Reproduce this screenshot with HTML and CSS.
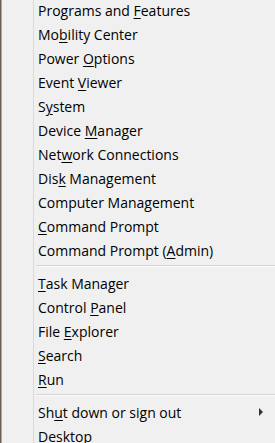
FILE: index.html
```html
<!DOCTYPE html>
<html lang="en">
<head>
    <meta charset="UTF-8">
    <meta name="viewport" content="width=device-width, initial-scale=1.0">
    <title>Quick Link Menu</title>
    <link rel="stylesheet" href="styles.css">
</head>
<body>
    <div class="menu">
        <div class="gutter"></div>
        <ul class="items">
            <li class="item">Programs and <u>F</u>eatures</li>
            <li class="item">Mo<u>b</u>ility Center</li>
            <li class="item">Power <u>O</u>ptions</li>
            <li class="item">Event <u>V</u>iewer</li>
            <li class="item">S<u>y</u>stem</li>
            <li class="item">Device <u>M</u>anager</li>
            <li class="item">Net<u>w</u>ork Connections</li>
            <li class="item">Dis<u>k</u> Management</li>
            <li class="item">Computer Mana<u>g</u>ement</li>
            <li class="item"><u>C</u>ommand Prompt</li>
            <li class="item">Command Prompt (<u>A</u>dmin)</li>
            <li class="sep"></li>
            <li class="item"><u>T</u>ask Manager</li>
            <li class="item">Control <u>P</u>anel</li>
            <li class="item">File <u>E</u>xplorer</li>
            <li class="item"><u>S</u>earch</li>
            <li class="item"><u>R</u>un</li>
            <li class="sep"></li>
            <li class="item has-sub">Sh<u>u</u>t down or sign out<span class="arrow"></span></li>
            <li class="item"><u>D</u>esktop</li>
        </ul>
    </div>
</body>
</html>
```

FILE: styles.css
```css
body, html {
    margin: 0;
    padding: 0;
    background-color: #f0f0f0;
    font-family: 'Open Sans', 'Noto Sans', sans-serif;
    overflow: hidden;
}
.menu {
    display: flex;
    height: 443px;
    border-left: 1px solid #6b5e55;
    box-shadow: inset 1px 0 0 #a8a8a8;
}
.gutter {
    width: 32px;
    border-right: 1px solid #dadada;
}
.items {
    flex: 1;
    list-style: none;
    margin: -1px 0 0 0;
    padding: 0 0 0 4px;
}
.item {
    position: relative;
    height: 24px;
    line-height: 24px;
    font-size: 14px;
    color: #000;
    white-space: nowrap;
}
.item u {
    text-decoration-thickness: 1px;
    text-underline-offset: 2px;
}
.sep {
    height: 7px;
    margin-left: -2px;
}
.sep::before {
    content: "";
    display: block;
    margin-top: 2px;
    height: 1px;
    background-color: #d5d5d5;
    border-bottom: 1px solid #fafafa;
}
.arrow {
    position: absolute;
    right: 12px;
    top: 7px;
    width: 0;
    height: 0;
    border-top: 4px solid transparent;
    border-bottom: 4px solid transparent;
    border-left: 4px solid #333;
}
```
